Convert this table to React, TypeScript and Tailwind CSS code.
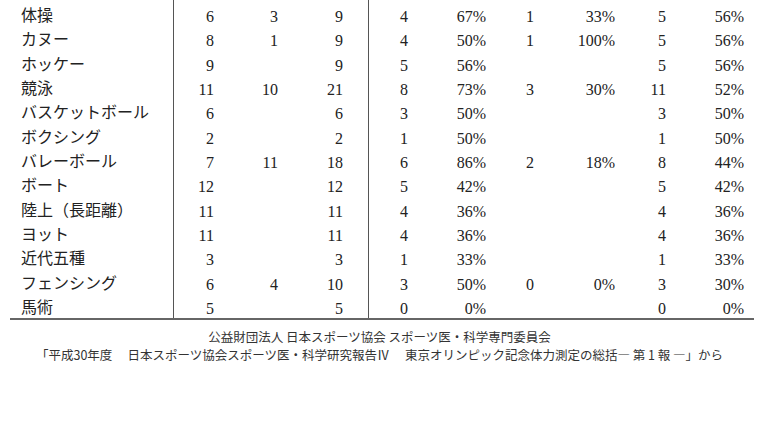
import React from 'react';

type Row = {
  name: string;
  m: string;
  f: string;
  total: string;
  mN: string;
  mP: string;
  fN: string;
  fP: string;
  tN: string;
  tP: string;
};

const ROWS: Row[] = [
  { name: '体操', m: '6', f: '3', total: '9', mN: '4', mP: '67%', fN: '1', fP: '33%', tN: '5', tP: '56%' },
  { name: 'カヌー', m: '8', f: '1', total: '9', mN: '4', mP: '50%', fN: '1', fP: '100%', tN: '5', tP: '56%' },
  { name: 'ホッケー', m: '9', f: '', total: '9', mN: '5', mP: '56%', fN: '', fP: '', tN: '5', tP: '56%' },
  { name: '競泳', m: '11', f: '10', total: '21', mN: '8', mP: '73%', fN: '3', fP: '30%', tN: '11', tP: '52%' },
  { name: 'バスケットボール', m: '6', f: '', total: '6', mN: '3', mP: '50%', fN: '', fP: '', tN: '3', tP: '50%' },
  { name: 'ボクシング', m: '2', f: '', total: '2', mN: '1', mP: '50%', fN: '', fP: '', tN: '1', tP: '50%' },
  { name: 'バレーボール', m: '7', f: '11', total: '18', mN: '6', mP: '86%', fN: '2', fP: '18%', tN: '8', tP: '44%' },
  { name: 'ボート', m: '12', f: '', total: '12', mN: '5', mP: '42%', fN: '', fP: '', tN: '5', tP: '42%' },
  { name: '陸上（長距離）', m: '11', f: '', total: '11', mN: '4', mP: '36%', fN: '', fP: '', tN: '4', tP: '36%' },
  { name: 'ヨット', m: '11', f: '', total: '11', mN: '4', mP: '36%', fN: '', fP: '', tN: '4', tP: '36%' },
  { name: '近代五種', m: '3', f: '', total: '3', mN: '1', mP: '33%', fN: '', fP: '', tN: '1', tP: '33%' },
  { name: 'フェンシング', m: '6', f: '4', total: '10', mN: '3', mP: '50%', fN: '0', fP: '0%', tN: '3', tP: '30%' },
  { name: '馬術', m: '5', f: '', total: '5', mN: '0', mP: '0%', fN: '', fP: '', tN: '0', tP: '0%' },
];

const GRID =
  'grid grid-cols-[163px_41px_64px_90px_40px_78px_48px_81px_51px_88px]';

function TableRow({ row }: { row?: Row }) {
  const r = row;
  return (
    <div className={`${GRID} ${r ? 'h-[24.33px] items-center' : 'h-[2px]'}`}>
      <div className="pl-[11px] font-['Noto_Sans_CJK_JP',sans-serif] text-[16px] leading-none">
        {r?.name}
      </div>
      <div className="self-stretch flex items-center justify-end pt-[6px] border-l-[1.5px] border-[#555]">{r?.m}</div>
      <div className="text-right pt-[6px]">{r?.f}</div>
      <div className="text-right pt-[6px] pr-[25px]">{r?.total}</div>
      <div className="self-stretch flex items-center justify-end pt-[6px] border-l-[1.5px] border-[#555]">{r?.mN}</div>
      <div className="text-right pt-[6px]">{r?.mP}</div>
      <div className="text-right pt-[6px]">{r?.fN}</div>
      <div className="text-right pt-[6px]">{r?.fP}</div>
      <div className="text-right pt-[6px]">{r?.tN}</div>
      <div className="text-right pt-[6px] pr-[10px]">{r?.tP}</div>
    </div>
  );
}

export default function App() {
  return (
    <div className="w-[759px] h-[427px] bg-white text-[#222] overflow-hidden">
      {/* 表 */}
      <div className="ml-[10px] w-[744px] border-b-2 border-[#666] font-['Liberation_Serif',serif] text-[16px] leading-none">
        <TableRow />
        {ROWS.map(row => (
          <TableRow key={row.name} row={row} />
        ))}
      </div>

      {/* 出典 */}
      <div className="mt-[8px] text-center font-['Noto_Sans_CJK_JP',sans-serif] text-[12.5px] leading-[18px] text-[#333]">
        <p>公益財団法人 日本スポーツ協会 スポーツ医・科学専門委員会</p>
        <p>「平成30年度　 日本スポーツ協会スポーツ医・科学研究報告Ⅳ　 東京オリンピック記念体力測定の総括― 第 1 報 ―」から</p>
      </div>
    </div>
  );
}
